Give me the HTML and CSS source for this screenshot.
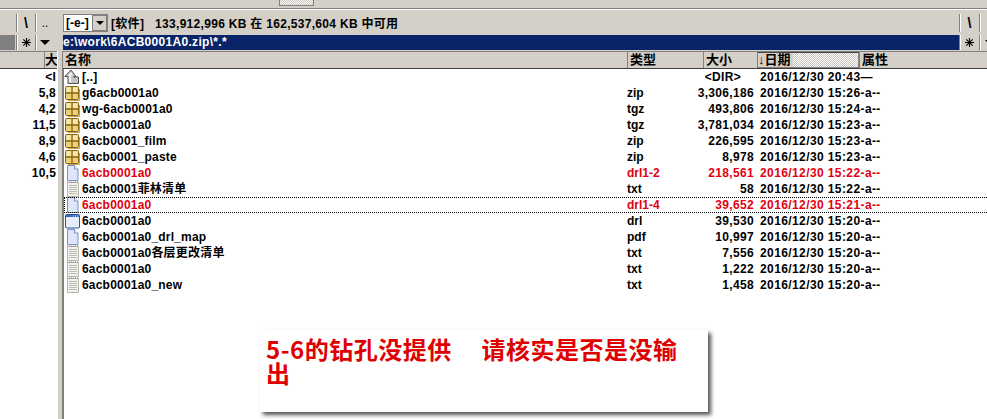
FILE: index.html
```html
<!DOCTYPE html>
<html lang="zh">
<head>
<meta charset="utf-8">
<title>Total Commander</title>
<link rel="stylesheet" href="styles.css">
</head>
<body>
<svg class="defs" width="0" height="0" aria-hidden="true">
  <defs>
    <symbol id="zip" viewBox="0 0 16 16">
      <rect x="1.500" y="1.500" width="13" height="13" rx="1" fill="#f0cf73" stroke="#84651c"/>
      <path d="M8 2v12M2 8h12" stroke="#84651c" stroke-width="1.300" fill="none"/>
      <path d="M2.500 2.500h4.500v4.500H2.500zM9 2.500h4.500v4.500H9z" fill="#fbe8a8"/>
      <path d="M14.500 3v11.500H3" stroke="#c9a040" fill="none" transform="translate(1 1)"/>
    </symbol>
    <symbol id="doc" viewBox="0 0 16 16">
      <path d="M3.500.5h7l3.500 3.500v11.500H3.500z" fill="#dfe6fa" stroke="#7d90c8"/>
      <path d="M10.500.5v3.500H14" fill="#fff" stroke="#7d90c8"/>
    </symbol>
    <symbol id="txt" viewBox="0 0 16 16">
      <path d="M3.500 1.500h11v14h-11z" fill="#f2f2ec" stroke="#b4b4ac"/>
      <path d="M5 4.500h8M5 6.500h8M5 8.500h8M5 10.500h8M5 12.500h8" stroke="#bcbcb4"/>
      <path d="M3 1h11" stroke="#808080" stroke-dasharray="1 1"/>
    </symbol>
    <symbol id="win" viewBox="0 0 16 16">
      <rect x="1.500" y="1.500" width="14" height="13.500" rx="1" fill="#e6edfb" stroke="#2f5296"/>
      <rect x="2" y="2" width="13" height="2" fill="#3a68b8"/>
      <path d="M9 3h5" stroke="#cfdcf6" stroke-dasharray="1 1"/>
    </symbol>
    <symbol id="up" viewBox="0 0 16 16">
      <path d="M7 1 .8 7.500H4V14.500h10.500V8h-5v-.5h2.500z" fill="#c4c4c4" stroke="#505050"/>
      <path d="M7 3 3.500 6.500H5V13.500h2V6.500h2z" fill="#efefef"/>
    </symbol>
    <symbol id="star" viewBox="0 0 9 9">
      <path d="M4.500 0v9M0 4.500h9M1.300 1.300l6.400 6.400M7.700 1.300 1.300 7.700" stroke="#000" stroke-width="1.100"/>
    </symbol>
  </defs>
</svg>

<div class="topbar"><div class="topbtn"></div></div>

<main class="panels">
  <section class="panel left">
    <div class="drive">
      <div class="tools lefttools">
        <span class="tool">\</span><span class="tool dots">..</span>
      </div>
    </div>
    <div class="pathrow">
      <div class="stub"></div>
      <div class="tools lefttools">
        <span class="tool"><svg class="staricon"><use href="#star"/></svg></span><span class="tool arrow"></span>
      </div>
    </div>
    <div class="head lefthead"><span class="hcell">大</span></div>
    <div class="leftlist">
      <div>&lt;I</div><div>5,8</div><div>4,2</div><div>11,5</div><div>8,9</div><div>4,6</div><div>10,5</div>
    </div>
  </section>

  <div class="splitter"></div>

  <section class="panel right">
    <div class="drive">
      <div class="combo"><span class="combotext">[-e-]</span><span class="combobtn"></span></div>
      <span class="freeinfo">[软件]&nbsp;&nbsp; 133,912,996 KB 在 162,537,604 KB 中可用</span>
      <div class="tools endtools"><span class="tool">\</span><span class="tool dots"></span></div>
    </div>
    <div class="pathrow">
      <div class="path">e:\work\6ACB0001A0.zip\*.*</div>
      <div class="tools endtools"><span class="tool"><svg class="staricon"><use href="#star"/></svg></span><span class="tool arrow"></span></div>
    </div>
    <div class="head headcols">
      <span class="hcell">名称</span>
      <span class="hcell">类型</span>
      <span class="hcell">大小</span>
      <span class="hcell sorted"><span class="sortlabel">↓日期</span></span>
      <span class="hcell">属性</span>
    </div>
    <div class="list">
      <div class="row cols"><span class="name"><svg class="ico"><use href="#up"/></svg>[..]</span><span></span><span class="size dirsize">&lt;DIR&gt;</span><span class="date">2016/12/30 20:43—</span></div>
      <div class="row cols"><span class="name"><svg class="ico"><use href="#zip"/></svg>g6acb0001a0</span><span>zip</span><span class="size">3,306,186</span><span class="date">2016/12/30 15:26-a--</span></div>
      <div class="row cols"><span class="name"><svg class="ico"><use href="#zip"/></svg>wg-6acb0001a0</span><span>tgz</span><span class="size">493,806</span><span class="date">2016/12/30 15:24-a--</span></div>
      <div class="row cols"><span class="name"><svg class="ico"><use href="#zip"/></svg>6acb0001a0</span><span>tgz</span><span class="size">3,781,034</span><span class="date">2016/12/30 15:23-a--</span></div>
      <div class="row cols"><span class="name"><svg class="ico"><use href="#zip"/></svg>6acb0001_film</span><span>zip</span><span class="size">226,595</span><span class="date">2016/12/30 15:23-a--</span></div>
      <div class="row cols"><span class="name"><svg class="ico"><use href="#zip"/></svg>6acb0001_paste</span><span>zip</span><span class="size">8,978</span><span class="date">2016/12/30 15:23-a--</span></div>
      <div class="row cols red"><span class="name"><svg class="ico"><use href="#doc"/></svg>6acb0001a0</span><span>drl1-2</span><span class="size">218,561</span><span class="date">2016/12/30 15:22-a--</span></div>
      <div class="row cols"><span class="name"><svg class="ico"><use href="#txt"/></svg>6acb0001菲林清单</span><span>txt</span><span class="size">58</span><span class="date">2016/12/30 15:22-a--</span></div>
      <div class="row cols red cursor"><span class="name"><svg class="ico"><use href="#doc"/></svg>6acb0001a0</span><span>drl1-4</span><span class="size">39,652</span><span class="date">2016/12/30 15:21-a--</span></div>
      <div class="row cols"><span class="name"><svg class="ico"><use href="#win"/></svg>6acb0001a0</span><span>drl</span><span class="size">39,530</span><span class="date">2016/12/30 15:20-a--</span></div>
      <div class="row cols"><span class="name"><svg class="ico"><use href="#doc"/></svg>6acb0001a0_drl_map</span><span>pdf</span><span class="size">10,997</span><span class="date">2016/12/30 15:20-a--</span></div>
      <div class="row cols"><span class="name"><svg class="ico"><use href="#txt"/></svg>6acb0001a0各层更改清单</span><span>txt</span><span class="size">7,556</span><span class="date">2016/12/30 15:20-a--</span></div>
      <div class="row cols"><span class="name"><svg class="ico"><use href="#txt"/></svg>6acb0001a0</span><span>txt</span><span class="size">1,222</span><span class="date">2016/12/30 15:20-a--</span></div>
      <div class="row cols"><span class="name"><svg class="ico"><use href="#txt"/></svg>6acb0001a0_new</span><span>txt</span><span class="size">1,458</span><span class="date">2016/12/30 15:20-a--</span></div>
    </div>
  </section>
</main>

<aside class="note">5-6的钻孔没提供&nbsp;&nbsp;&nbsp;&nbsp; 请核实是否是没输出</aside>
</body>
</html>
```

FILE: styles.css
```css
* { box-sizing: border-box; }
html, body { margin: 0; height: 100%; }
body {
  width: 987px;
  height: 419px;
  overflow: hidden;
  position: relative;
  background: #d4d0c8;
  font-family: "Liberation Sans", "Noto Sans CJK SC", sans-serif;
  font-size: 12px;
  font-weight: 700;
  color: #000;
}
.defs { display: block; height: 0; }
.topbar {
  height: 10px;
  background: #d4d0c8;
  border-bottom: 1px solid #fff;
  box-shadow: inset 0 -2px 0 -1px #808080;
  display: flex;
  justify-content: flex-end;
  padding-right: 673px;
}
.topbtn {
  width: 35px;
  height: 6px;
  background: repeating-conic-gradient(#fff 0 25%, #c8c4bc 0 50%) 0 0 / 2px 2px;
  border: 1px solid #808080;
  border-top: 0;
}
.panels { display: flex; height: 409px; }
.panel { display: flex; flex-direction: column; min-width: 0; }
.left { width: 57px; flex: none; }
.right { flex: 1; }
.splitter {
  width: 6px;
  flex: none;
  background: #d4d0c8;
  margin-top: 41px;
  border-left: 1px solid #fff;
  border-right: 1px solid #808080;
}
.drive {
  height: 25px;
  display: flex;
  align-items: center;
}
.pathrow {
  height: 15px;
  display: flex;
  align-items: stretch;
  margin-bottom: 1px;
}
.stub { width: 15px; background: #808080; }
.tools { display: flex; height: 100%; align-items: center; margin-left: auto; }
.lefttools { padding-right: 3px; }
.tool {
  width: 19px;
  flex: none;
  height: 100%;
  display: flex;
  align-items: center;
  justify-content: center;
  border-left: 1px solid #808080;
  box-shadow: inset 1px 0 0 #fff;
  font-size: 14px;
}
.drive .tool { height: 18px; }
.dots { font-weight: 400; font-size: 12px; }
.staricon { width: 9px; height: 9px; }
.arrow::before {
  content: "";
  border-left: 5px solid transparent;
  border-right: 5px solid transparent;
  border-top: 5px solid #000;
}
.combo {
  width: 45px;
  height: 18px;
  display: flex;
  background: #fff;
  border: 1px solid #808080;
  margin-right: 3px;
  flex: none;
}
.combotext { flex: 1; line-height: 16px; padding-left: 2px; }
.combobtn {
  width: 15px;
  background: #d4d0c8;
  border: 1px solid #808080;
  display: flex;
  align-items: center;
  justify-content: center;
}
.combobtn::before {
  content: "";
  border-left: 4px solid transparent;
  border-right: 4px solid transparent;
  border-top: 4px solid #000;
}
.freeinfo { white-space: pre; letter-spacing: 0.3px; }
.endtools { width: 28px; flex: none; overflow: hidden; }
.endtools .tool { width: 20px; }
.path {
  flex: 1;
  background: #0a246a;
  color: #fff;
  line-height: 15px;
  letter-spacing: 0.3px;
}
.head {
  height: 18px;
  display: flex;
  border-top: 1px solid #808080;
  border-bottom: 1px solid #404040;
  background: #d4d0c8;
}
.lefthead { justify-content: flex-end; }
.lefthead .hcell { width: 13px; border-left: 1px solid #808080; padding-left: 0; }
.hcell { line-height: 16px; font-size: 13px; padding-left: 2px; white-space: nowrap; }
.headcols {
  display: grid;
  grid-template-columns: 564px 76px 54px 102px 1fr;
}
.cols {
  display: grid;
  grid-template-columns: 563px 67px 60px 1fr;
}
.hcell + .hcell { border-left: 1px solid #808080; }
.sorted {
  background: repeating-conic-gradient(#fff 0 25%, #c8c4bc 0 50%) 0 0 / 2px 2px;
  border: 1px solid #808080;
  border-top-color: #404040;
  padding-left: 0;
  line-height: 14px;
}
.sortlabel { display: inline-block; background: #d4d0c8; padding-right: 2px; }
.leftlist {
  flex: 1;
  background: #fff;
  text-align: right;
  line-height: 16px;
  padding-right: 1px;
  letter-spacing: 0.2px;
}
.list {
  flex: 1;
  background: #fff;
  border-left: 1px solid #808080;
  overflow: hidden;
}
.row { height: 16px; line-height: 16px; white-space: nowrap; position: relative; }
.row > span { min-width: 0; }
.name { display: flex; align-items: center; gap: 2px; letter-spacing: 0.2px; }
.ico { width: 16px; height: 16px; flex: none; }
.size { text-align: right; letter-spacing: 0.33px; }
.dirsize { padding-right: 13px; }
.date { padding-left: 6px; letter-spacing: 0.4px; }
.red { color: #e3000f; }
.cursor::after {
  content: "";
  position: absolute;
  inset: 0 -2px 0 0;
  border: 1px dotted #000;
  pointer-events: none;
}
.note {
  position: absolute;
  left: 260px;
  top: 330px;
  width: 448px;
  height: 82px;
  background: #fff;
  box-shadow: 3px 3px 4px #555;
  color: #e00000;
  font-family: "Noto Sans CJK SC", sans-serif;
  font-size: 24px;
  font-weight: 700;
  letter-spacing: 0.5px;
  line-height: 24px;
  padding: 7px 8px 0 6px;
}
```
